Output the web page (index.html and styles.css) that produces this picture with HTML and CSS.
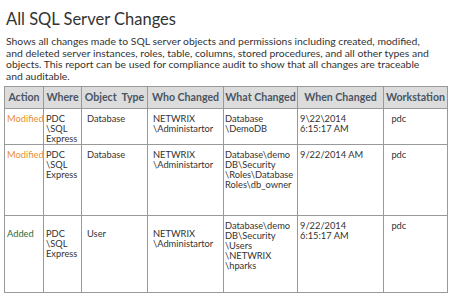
FILE: index.html
```html
<!DOCTYPE html>
<html lang="en">
<head>
  <meta charset="UTF-8">
  <title>All SQL Server Changes</title>
  <link rel="stylesheet" href="styles.css">
</head>
<body>
  <h1>All SQL Server Changes</h1>
  <p class="intro">Shows all changes made to SQL server objects and permissions including created, modified, and deleted server instances, roles, table, columns, stored procedures, and all other types and objects. This report can be used for compliance audit to show that all changes are traceable and auditable.</p>
  <table class="report">
    <colgroup>
      <col class="c-action">
      <col class="c-where">
      <col class="c-type">
      <col class="c-who">
      <col class="c-what">
      <col class="c-when">
      <col class="c-ws">
    </colgroup>
    <thead>
      <tr>
        <th>Action</th>
        <th>Where</th>
        <th>Object&nbsp; Type</th>
        <th>Who Changed</th>
        <th>What Changed</th>
        <th>When Changed</th>
        <th>Workstation</th>
      </tr>
    </thead>
    <tbody>
      <tr class="row-1">
        <td class="modified">Modified</td>
        <td>PDC<br>\SQL<br>Express</td>
        <td class="pad">Database</td>
        <td class="pad">NETWRIX<br>\Administartor</td>
        <td class="tight">Database<br>\DemoDB</td>
        <td>9\22\2014<br>6:15:17 AM</td>
        <td class="pad">&nbsp;pdc</td>
      </tr>
      <tr class="row-2">
        <td class="modified">Modified</td>
        <td>PDC<br>\SQL<br>Express</td>
        <td class="pad">Database</td>
        <td class="pad">NETWRIX<br>\Administartor</td>
        <td class="tight">Database\demo<br>DB\Security<br>\Roles\Database<br>Roles\db_owner</td>
        <td>9/22/2014 AM</td>
        <td class="pad">&nbsp;pdc</td>
      </tr>
      <tr class="row-3">
        <td class="added low">Added</td>
        <td class="low">PDC<br>\SQL<br>Express</td>
        <td class="pad low">User</td>
        <td class="pad low">NETWRIX<br>\Administartor</td>
        <td class="tight">Database\demo<br>DB\Security<br>\Users<br>\NETWRIX<br>\hparks</td>
        <td>9/22/2014<br>6:15:17 AM</td>
        <td class="pad">&nbsp;pdc</td>
      </tr>
    </tbody>
  </table>
</body>
</html>
```

FILE: styles.css
```css
body {
  font-family: Lato, "Open Sans", sans-serif;
  color: #333;
  background: #ffffff;
  margin: 0;
  padding: 0 4px;
}
h1 {
  font-size: 16.5px;
  font-weight: normal;
  margin: 7px 0 0 2px;
  line-height: 24px;
}
.intro {
  font-size: 10.4px;
  line-height: 11.7px;
  margin: 5px 0 0 2px;
  width: 426px;
}
.report {
  table-layout: fixed;
  width: 443px;
  border-collapse: collapse;
  margin-top: 3px;
  font-size: 9.3px;
  line-height: 10px;
}
.c-action { width: 39px; }
.c-where { width: 38px; }
.c-type { width: 66px; }
.c-who { width: 76px; }
.c-what { width: 74px; }
.c-when { width: 86px; }
.c-ws { width: 64px; }
th, td {
  border: 1px solid #999;
  padding: 0 2px;
  text-align: left;
  vertical-align: top;
  white-space: nowrap;
}
th {
  background: #dcdcdc;
  color: #4a5564;
  font-size: 10.6px;
  font-weight: bold;
  height: 21px;
  vertical-align: middle;
  text-align: center;
  padding: 0;
}
td {
  padding-top: 5px;
}
.row-1 td { height: 30px; }
.row-2 td { height: 65px; }
.row-3 td { height: 71px; }
.pad { padding-left: 5px; }
.tight { padding-left: 1px; }
.low { padding-top: 13px; }
.row-3 td.low { height: 63px; }
.modified { color: #e8912a; }
.added { color: #2e6b33; }
```
